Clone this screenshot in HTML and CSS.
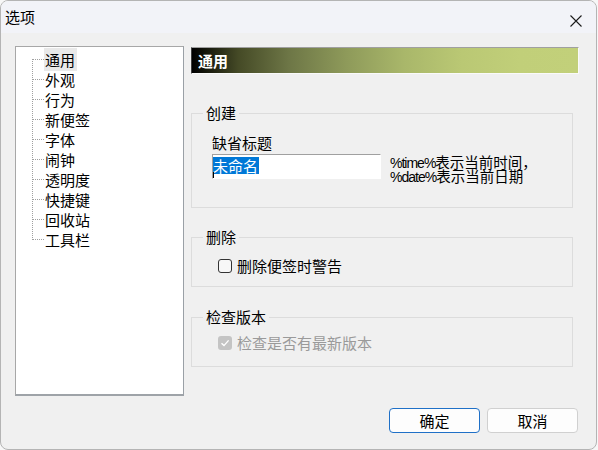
FILE: index.html
```html
<!DOCTYPE html>
<html lang="zh-CN">
<head>
<meta charset="utf-8">
<title>选项</title>
<link rel="stylesheet" href="styles.css">
</head>
<body>
<div class="window">
  <div class="titlebar">
    <span class="title">选项</span>
    <svg class="close" width="12" height="12" viewBox="0 0 12 12"><path d="M0.5 0.5 L11.5 11.5 M11.5 0.5 L0.5 11.5" stroke="#1b1b1b" stroke-width="1.1" fill="none"/></svg>
  </div>
  <div class="main">
    <div class="tree">
      <ul class="tree-list">
        <li><span class="sel">通用</span></li>
        <li>外观</li>
        <li>行为</li>
        <li>新便签</li>
        <li>字体</li>
        <li>闹钟</li>
        <li>透明度</li>
        <li>快捷键</li>
        <li>回收站</li>
        <li>工具栏</li>
      </ul>
    </div>
    <div class="panel">
      <div class="header">通用</div>
      <fieldset class="group g-create">
        <legend>创建</legend>
        <div class="label">缺省标题</div>
        <div class="field-row">
          <div class="textbox"><span class="selected">未命名</span><span class="caret"></span></div>
          <div class="note">
            <div class="note-line"><span class="code">%time%</span>表示当前时间，</div>
            <div class="note-line"><span class="code">%date%</span>表示当前日期</div>
          </div>
        </div>
      </fieldset>
      <fieldset class="group g-delete">
        <legend>删除</legend>
        <label class="check-row"><span class="box"></span><span>删除便签时警告</span></label>
      </fieldset>
      <fieldset class="group g-version">
        <legend>检查版本</legend>
        <label class="check-row disabled"><span class="box checked"><svg width="10" height="10" viewBox="0 0 10 10"><path d="M1.5 5.2 L4 7.6 L8.6 2.4" stroke="#fff" stroke-width="1.4" fill="none"/></svg></span><span>检查是否有最新版本</span></label>
      </fieldset>
    </div>
  </div>
  <div class="buttons">
    <button class="btn primary">确定</button>
    <button class="btn">取消</button>
  </div>
</div>
</body>
</html>
```

FILE: styles.css
```css
html, body {
  margin: 0;
  padding: 0;
  background: #f7f7f7;
}
body {
  font-family: "Noto Sans CJK SC", "Noto Sans", sans-serif;
  font-size: 15px;
  color: #000;
}
.window {
  width: 597px;
  height: 450px;
  box-sizing: border-box;
  border: 1px solid #b4b4b4;
  border-radius: 8px;
  background: #f0f0f0;
  overflow: hidden;
}
.titlebar {
  height: 32px;
  background: #f2f3f8;
  display: flex;
  align-items: center;
  justify-content: space-between;
  padding: 0 14px 0 4px;
}
.title {
  font-size: 15px;
  line-height: 16px;
}
.close {
  display: block;
  margin-top: 8px;
}
.main {
  display: flex;
  padding-left: 14px;
  margin-top: 13px;
}
.tree {
  width: 169px;
  height: 350px;
  box-sizing: border-box;
  background: #fff;
  border: 1px solid #a7a7a7;
  border-right-color: #9aa0a6;
  border-bottom: 2px solid #9ea3a8;
  padding-top: 3px;
}
.tree-list {
  list-style: none;
  margin: 0 0 0 16px;
  padding: 0;
  position: relative;
}
.tree-list::before {
  content: "";
  position: absolute;
  left: 0;
  top: 9px;
  bottom: 10px;
  border-left: 1px dotted #a0a0a0;
}
.tree-list li {
  position: relative;
  line-height: 20px;
  height: 20px;
  padding-left: 13px;
  white-space: nowrap;
}
.tree-list li::before {
  content: "";
  position: absolute;
  left: 1px;
  top: 9px;
  width: 11px;
  border-top: 1px dotted #a0a0a0;
}
.sel {
  background: #e9e9e9;
  padding: 1px 2px 1px 1px;
  margin-left: -1px;
}
.panel {
  margin-left: 7px;
  width: 388px;
}
.header {
  margin-top: 1px;
  height: 27px;
  box-sizing: border-box;
  border-top: 1px solid #a0a0a0;
  border-left: 1px solid #404040;
  border-bottom: 1px solid #fafafa;
  border-right: 1px solid #fafafa;
  background: linear-gradient(to right, #000000 0%, #454a26 12%, #6d7646 25%, #8e9a5a 40%, #a9b76a 55%, #bac874 70%, #c1cf79 85%, #c2d07a 100%);
  color: #fff;
  font-weight: bold;
  font-size: 15px;
  line-height: 25px;
  padding-left: 6px;
}
.group {
  width: 382px;
  box-sizing: border-box;
  margin: 0;
  border: 1px solid #dcdcdc;
  padding: 0 0 0 11px;
}
.group legend {
  padding: 0 3px;
  line-height: 16px;
  font-size: 15px;
}
.g-create {
  margin-top: 31px;
  padding-top: 14px;
  padding-bottom: 24px;
}
.g-delete {
  margin-top: 21px;
  padding-top: 13px;
  padding-bottom: 12px;
}
.g-version {
  margin-top: 22px;
  padding-top: 10px;
  padding-bottom: 15px;
}
.label {
  margin-left: 9px;
  line-height: 16px;
}
.field-row {
  display: flex;
  align-items: flex-start;
  margin-left: 9px;
  margin-top: 3px;
}
.textbox {
  width: 169px;
  height: 25px;
  box-sizing: border-box;
  background: #fff;
  border-top: 1px solid #a0a0a0;
  border-left: 1px solid #a0a0a0;
  border-right: 1px solid #fff;
  border-bottom: 1px solid #fff;
  position: relative;
}
.selected {
  display: inline-block;
  background: #0078d7;
  color: #fff;
  line-height: 17px;
  height: 17px;
  padding-right: 1px;
}
.caret {
  position: absolute;
  left: 0;
  top: 17px;
  height: 6px;
  border-left: 1px solid #000;
}
.note {
  margin-left: 9px;
  margin-top: 1px;
}
.note-line {
  font-size: 14.5px;
  line-height: 14px;
  height: 14px;
  white-space: nowrap;
}
.code {
  font-family: "Liberation Sans", Arial, sans-serif;
  font-size: 14px;
  letter-spacing: -1px;
}
.check-row {
  display: flex;
  align-items: center;
  margin-left: 15px;
  line-height: 16px;
  height: 16px;
}
.box {
  width: 14px;
  height: 14px;
  box-sizing: border-box;
  border: 1px solid #333;
  border-radius: 3px;
  background: #f7f7f7;
  margin-right: 5px;
  display: flex;
  align-items: center;
  justify-content: center;
}
.box.checked {
  border: none;
  background: #c4c4c4;
}
.disabled {
  color: #9a9a9a;
}
.buttons {
  display: flex;
  justify-content: flex-end;
  gap: 7px;
  margin-top: 12px;
  padding-right: 18px;
}
.btn {
  width: 91px;
  height: 25px;
  box-sizing: border-box;
  background: #fdfdfd;
  border: 1px solid #d0d0d0;
  border-radius: 4px;
  font-family: "Noto Sans CJK SC", "Noto Sans", sans-serif;
  font-size: 15px;
  line-height: 16px;
  padding: 0;
  color: #000;
}
.btn.primary {
  border-color: #1f70c7;
}
```
